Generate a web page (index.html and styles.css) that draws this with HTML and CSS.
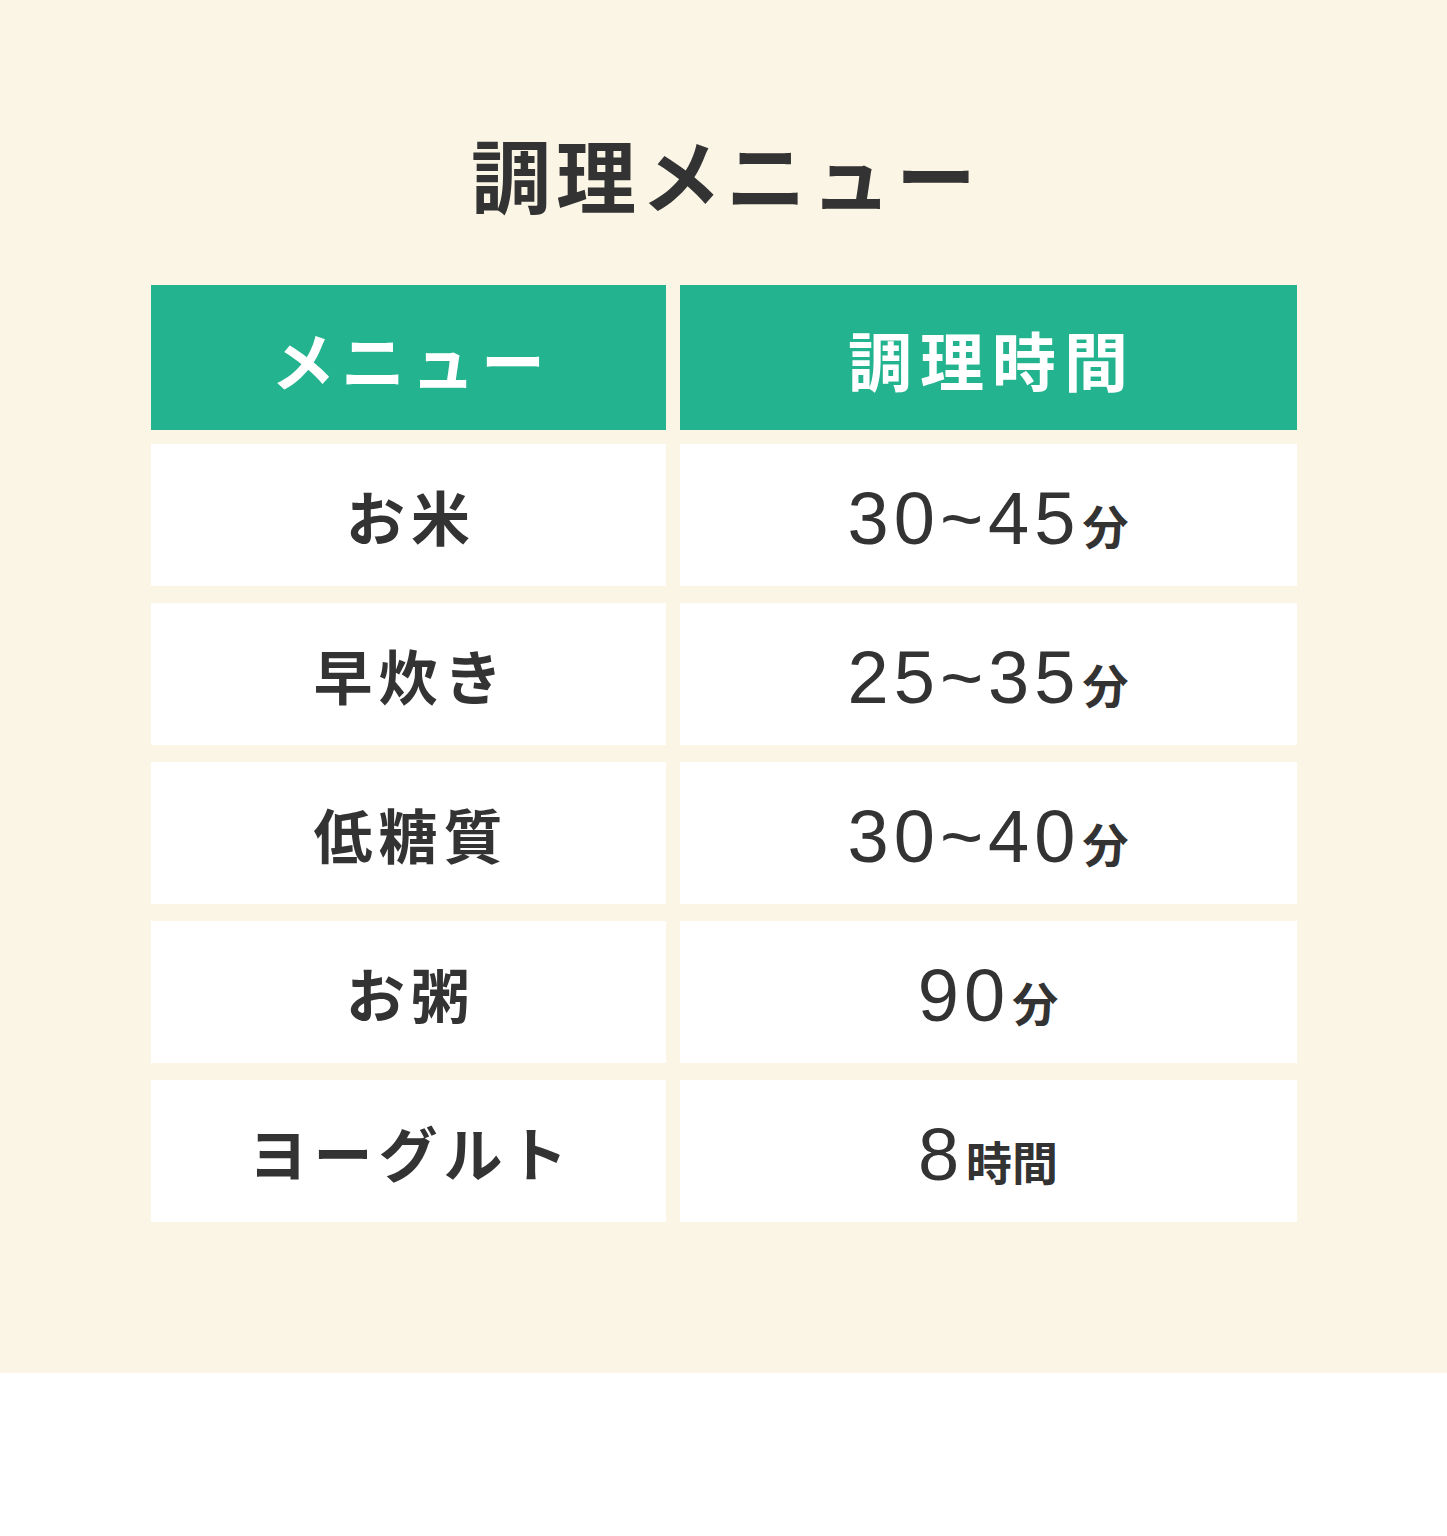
FILE: index.html
```html
<!DOCTYPE html>
<html lang="ja">
<head>
<meta charset="utf-8">
<title>調理メニュー</title>
<link rel="stylesheet" href="styles.css">
</head>
<body>
<section class="menu">
  <h1 class="title">調理メニュー</h1>
  <div class="table">
    <div class="row head">
      <div class="cell">メニュー</div>
      <div class="cell wide">調理時間</div>
    </div>
    <div class="rows">
      <div class="row">
        <div class="cell name">お米</div>
        <div class="cell time"><span class="num">30~45</span><span class="unit">分</span></div>
      </div>
      <div class="row">
        <div class="cell name">早炊き</div>
        <div class="cell time"><span class="num">25~35</span><span class="unit">分</span></div>
      </div>
      <div class="row">
        <div class="cell name">低糖質</div>
        <div class="cell time"><span class="num">30~40</span><span class="unit">分</span></div>
      </div>
      <div class="row">
        <div class="cell name">お粥</div>
        <div class="cell time"><span class="num">90</span><span class="unit">分</span></div>
      </div>
      <div class="row">
        <div class="cell name">ヨーグルト</div>
        <div class="cell time"><span class="num">8</span><span class="unit">時間</span></div>
      </div>
    </div>
  </div>
</section>
</body>
</html>
```
FILE: styles.css
```css
html, body {
  margin: 0;
  padding: 0;
  background: #ffffff;
}

body {
  font-family: "Noto Sans CJK JP", "Noto Sans", sans-serif;
  color: #333333;
}

.menu {
  background: #fbf5e5;
  height: 1373px;
  box-sizing: border-box;
  padding-top: 132px;
}

.title {
  margin: 0 0 73px;
  text-align: center;
  font-size: 80px;
  line-height: 80px;
  font-weight: 700;
  letter-spacing: 5px;
  padding-left: 5px;
  color: #333333;
}

.table {
  width: 1146px;
  margin: 0 auto;
}

.row {
  display: grid;
  grid-template-columns: 515px 617px;
  column-gap: 14px;
  height: 142px;
}

.rows {
  display: flex;
  flex-direction: column;
  gap: 17px;
}

.cell {
  display: flex;
  align-items: center;
  justify-content: center;
  background: #ffffff;
}

.head {
  height: 145px;
  margin-bottom: 14px;
}

.head .cell {
  background: #23b48f;
  color: #ffffff;
  font-size: 64px;
  font-weight: 700;
  letter-spacing: 6px;
  padding-left: 6px;
}

.head .wide {
  letter-spacing: 8px;
  padding-left: 8px;
}

.name {
  font-size: 59px;
  font-weight: 700;
  letter-spacing: 6px;
  padding-left: 6px;
}

.time {
  align-items: baseline;
  padding-top: 38px;
  box-sizing: border-box;
}

.num {
  font-family: "Liberation Sans", Arial, sans-serif;
  font-size: 74px;
  line-height: 74px;
  font-weight: 400;
  letter-spacing: 5px;
}

.unit {
  font-size: 46px;
  font-weight: 700;
  margin-left: 2px;
}
```
